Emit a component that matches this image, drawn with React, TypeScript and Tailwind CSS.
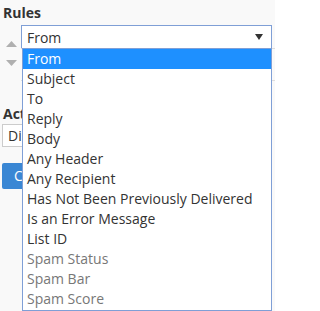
import { useState } from 'react';

const FIELDS = [
  { label: 'From', muted: false },
  { label: 'Subject', muted: false },
  { label: 'To', muted: false },
  { label: 'Reply', muted: false },
  { label: 'Body', muted: false },
  { label: 'Any Header', muted: false },
  { label: 'Any Recipient', muted: false },
  { label: 'Has Not Been Previously Delivered', muted: false },
  { label: 'Is an Error Message', muted: false },
  { label: 'List ID', muted: false },
  { label: 'Spam Status', muted: true },
  { label: 'Spam Bar', muted: true },
  { label: 'Spam Score', muted: true }
];

const Arrow = ({ up }: { up?: boolean }) => (
  <svg width="11" height="6" viewBox="0 0 11 6" className="fill-[#b0b0b0]">
    {up ? <path d="M0 6 L5.5 0 L11 6 Z" /> : <path d="M0 0 L11 0 L5.5 6 Z" />}
  </svg>
);

const App = () => {
  const [selected, setSelected] = useState(0);

  return (
    <div className="relative w-[275px] h-[311px] overflow-hidden bg-[#f9f9f9] font-['Open_Sans',sans-serif] text-[14px] text-[#333333]">
      <h2 className="pl-[3px] pt-[3px] font-bold text-[14px] leading-[20px]">
        Rules
      </h2>

      <div className="flex mt-[2px]">
        <div className="w-[21px] flex flex-col items-center pt-[16px] gap-[13px] pl-[1px]">
          <Arrow up />
          <Arrow />
        </div>
        <div className="flex-1">
          <div className="h-[24px] border border-[#7f9fd6] bg-white flex items-center justify-between pl-[5px] pr-[8px] w-[251px]">
            <span>From</span>
            <svg width="8" height="6" viewBox="0 0 8 6" className="fill-[#333333]">
              <path d="M0 0 L8 0 L4 6 Z" />
            </svg>
          </div>
          <div className="h-[33px] border-y border-[#dddddd] -mt-px" />
        </div>
      </div>

      <h2 className="pl-[3px] mt-[23px] font-bold text-[14px] leading-[20px]">
        Actions
      </h2>
      <div className="ml-[2px] mt-0 h-[23px] w-[200px] border border-[#cccccc] bg-white pl-[5px] leading-[21px]">
        Discard Message
      </div>
      <button className="ml-[2px] mt-[16px] h-[26px] px-[12px] bg-[#3a87d4] text-white rounded-[2px] leading-[26px]">
        Create
      </button>

      <ul className="absolute left-[22px] top-[48px] w-[250px] h-[263px] bg-white border border-[#7f9fd6]">
        {FIELDS.map((f, i) => (
          <li
            key={f.label}
            onClick={() => setSelected(i)}
            className={
              i === selected
                ? 'h-[20px] leading-[20px] pl-[4px] bg-[#1e90ff] text-white'
                : f.muted
                  ? 'h-[20px] leading-[20px] pl-[4px] text-[#777777]'
                  : 'h-[20px] leading-[20px] pl-[4px] text-[#333333]'
            }
          >
            {f.label}
          </li>
        ))}
      </ul>
    </div>
  );
};

export default App;
